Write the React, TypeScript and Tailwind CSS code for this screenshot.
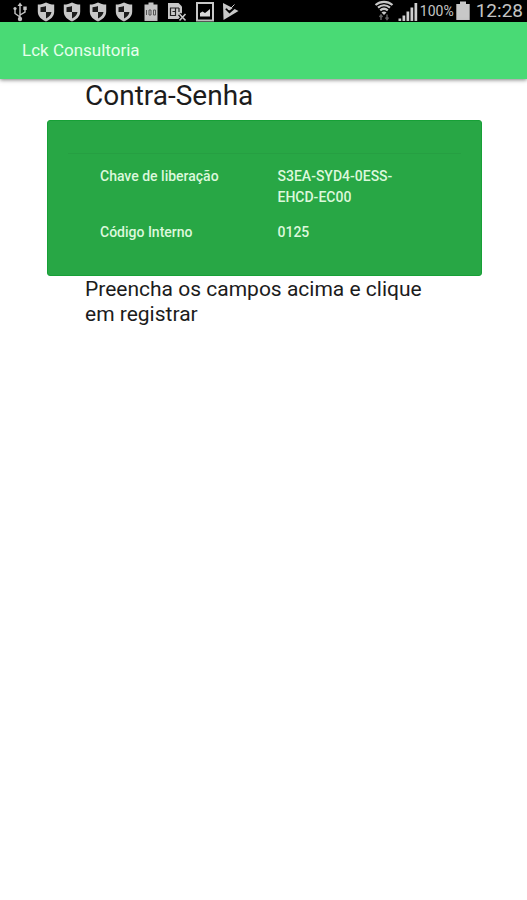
const fields = [
  { label: "Chave de liberação", value: "S3EA-SYD4-0ESS-EHCD-EC00" },
  { label: "Código Interno", value: "0125" },
];

function UsbIcon() {
  return (
    <svg viewBox="0 0 16 22" className="h-[22px] w-4" fill="none" stroke="#c4c4c4" strokeWidth="1.4">
      <path d="M8 5v14M8 17L3 13.500V9M8 15l5-3V9" />
      <path d="M5.500 6L8 2.500l2.500 3.500z" fill="#c4c4c4" stroke="none" />
      <circle cx="8" cy="19" r="2.200" fill="#c4c4c4" stroke="none" />
      <circle cx="3" cy="8.500" r="1.600" fill="#c4c4c4" stroke="none" />
      <path d="M11.300 6.500h3.400v3.400h-3.400z" fill="#c4c4c4" stroke="none" />
    </svg>
  );
}

function ShieldIcon() {
  return (
    <svg viewBox="0 0 18 22" className="h-[22px] w-[18px]">
      <path d="M9 2.500c2.500 1.300 5 2 8.200 2.100V11.500c0 5-3.700 8-8.200 10-4.500-2-8.200-5-8.200-10V4.600C4 4.500 6.500 3.800 9 2.500z" fill="#c8c8c8" />
      <path d="M9 6V12H3.500V7.200C5.500 7.100 7.500 6.700 9 6zM9 12h5.500c-.4 3-2.500 5-5.500 6.500z" fill="#1c1c1c" />
    </svg>
  );
}

function BatteryLevelIcon() {
  return (
    <svg viewBox="0 0 16 22" className="h-[22px] w-4">
      <path d="M5.500 2.500h5v2H14.500v16.500h-13V4.500h4z" fill="#c4c4c4" />
      <path d="M3.500 10v5M6 10h2v5H6zM10.500 10h2v5h-2z" fill="none" stroke="#555" strokeWidth="1" />
    </svg>
  );
}

function SimErrorIcon() {
  return (
    <svg viewBox="0 0 20 22" className="h-[22px] w-5" fill="none">
      <path d="M1 3h10.500l3.500 3.500V19H1z" fill="#c8c8c8" />
      <path d="M3 8h9M5.500 11.500H8M3 15.500h6M8.500 8v8M3.500 8v8M12 8v4" stroke="#222" strokeWidth="1.200" />
      <path d="M12.500 14l6 6.500M18.500 14l-6 6.500" stroke="#000" strokeWidth="4" />
      <path d="M12.500 14l6 6.500M18.500 14l-6 6.500" stroke="#c8c8c8" strokeWidth="1.600" />
    </svg>
  );
}

function PictureIcon() {
  return (
    <svg viewBox="0 0 20 22" className="h-[22px] w-5">
      <path d="M2 3h16v17.500H2z" fill="none" stroke="#c8c8c8" strokeWidth="2" />
      <path d="M5 16.500V13l2.500-1.500L10 13l2-1.500 3-2.500v7.500z" fill="#d8d8d8" />
    </svg>
  );
}

function PlayCheckIcon() {
  return (
    <svg viewBox="0 0 18 22" className="h-[22px] w-[18px]">
      <path d="M2 3l15.500 8L2.500 20z" fill="#c8c8c8" />
      <path d="M5 8.500l3.500 3.500L15.500 6" fill="none" stroke="#000" strokeWidth="2.200" />
      <path d="M4.500 7l3.500 3L13.500 4.500" fill="none" stroke="#c8c8c8" strokeWidth="1" />
    </svg>
  );
}

function WifiIcon() {
  return (
    <svg viewBox="0 0 20 22" className="h-[22px] w-5" fill="none" stroke="#c8c8c8">
      <path d="M1.500 5c5-4.200 12-4.200 17 0M4 7.700c3.600-3 8.400-3 12 0M6.200 10.400c2.300-2 5.300-2 7.600 0" strokeWidth="2.200" />
      <path d="M7.500 12.500c1.500-1.300 3.500-1.300 5 0L10 15z" fill="#c8c8c8" stroke="none" />
      <path d="M7 20v-5M5.500 17L7 15l1.500 2M13 14.500v5M11.500 17.500l1.500 2 1.500-2" stroke="#606060" strokeWidth="1.500" />
    </svg>
  );
}

function SignalIcon() {
  return (
    <svg viewBox="0 0 20 22" className="h-[22px] w-5" fill="#d0d0d0">
      <path d="M.5 18.500h2.700V21H.5zM4.500 15.500h2.700V21H4.500zM8.500 11.500h2.700V21H8.500zM12.500 7.500h2.700V21h-2.700zM16.500 3h2.700v18h-2.700z" />
    </svg>
  );
}

function BatteryIcon() {
  return (
    <svg viewBox="0 0 14 22" className="h-[22px] w-3.5" fill="#c8c8c8">
      <path d="M4 1.500h6V4h3.700v16H.3V4H4z" />
    </svg>
  );
}

function StatusBar() {
  return (
    <div className="flex h-[22px] items-center justify-between overflow-hidden bg-black pr-1 pl-3 text-[#c4c4c4]">
      <div className="flex items-center gap-2">
        <UsbIcon />
        <div className="flex items-center gap-2 pr-0.5 pl-px">
          <ShieldIcon />
          <ShieldIcon />
          <ShieldIcon />
          <ShieldIcon />
        </div>
        <BatteryLevelIcon />
        <SimErrorIcon />
        <div className="flex items-center gap-1.5">
          <PictureIcon />
          <PlayCheckIcon />
        </div>
      </div>
      <div className="flex items-center gap-0.5">
        <div className="flex items-center gap-1">
          <WifiIcon />
          <SignalIcon />
        </div>
        <span className="text-sm">100%</span>
        <BatteryIcon />
        <span className="pl-1 text-[19px]">12:28</span>
      </div>
    </div>
  );
}

export default function App() {
  return (
    <div className="min-h-screen bg-white font-[Roboto,sans-serif] text-[#1c1c1c]">
      <StatusBar />
      <header className="relative flex h-[57px] items-center bg-[#49da75] px-[22px] shadow-[0_1px_4px_rgba(0,0,0,0.5)]">
        <span className="text-[17px] text-[#e6ffec]">Lck Consultoria</span>
      </header>

      <main className="pr-[45px] pl-[47px]">
        <h1 className="px-[38px] pt-px pb-2 text-[28px] leading-8">Contra-Senha</h1>

        <section className="rounded-[3px] border border-[#17a037] bg-[#28a745] px-5 pt-8 pb-7">
          <hr className="border-[#269f42]" />
          <dl className="grid grid-cols-2 gap-y-[14px] pt-3 pr-1.5 pb-1 pl-8 text-sm leading-[21px] font-medium text-[#dcf8dc]">
            {fields.map((field) => (
              <div key={field.label} className="contents">
                <dt>{field.label}</dt>
                <dd className="pr-8">{field.value}</dd>
              </div>
            ))}
          </dl>
        </section>

        <p className="px-[38px] pt-px text-[21px] leading-[25px]">Preencha os campos acima e clique em registrar</p>
      </main>
    </div>
  );
}
